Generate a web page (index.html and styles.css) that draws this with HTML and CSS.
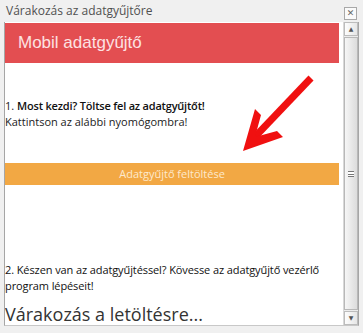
FILE: index.html
```html
<!DOCTYPE html>
<html lang="hu">
<head>
    <meta charset="UTF-8">
    <meta name="viewport" content="width=device-width, initial-scale=1.0">
    <title>Várakozás az adatgyűjtőre</title>
    <link rel="stylesheet" href="styles.css">
</head>
<body>
    <div class="window">
        <div class="titlebar">
            <span class="title">Várakozás az adatgyűjtőre</span>
            <span class="close">&#x2715;</span>
        </div>
        <div class="frame">
            <div class="page">
                <div class="header">Mobil adatgyűjtő</div>
                <p class="step first">1. <b>Most kezdi? Töltse fel az adatgyűjtőt!</b><br>Kattintson az alábbi nyomógombra!</p>
                <div class="upload">Adatgyűjtő feltöltése</div>
                <p class="step second">2. Készen van az adatgyűjtéssel? Kövesse az adatgyűjtő vezérlő program lépéseit!</p>
                <div class="waiting">Várakozás a letöltésre...</div>

                <!-- piros nyíl a gombra -->
                <svg class="arrow" width="80" height="84" viewBox="0 0 80 84">
                    <path d="M70 3 L10 66" stroke="#f01010" stroke-width="7" stroke-linecap="butt" fill="none"/>
                    <path d="M2 76 L14 34 L20 40 L14 62 L36 56 L42 62 Z" fill="#f01010"/>
                </svg>
            </div>
            <div class="scrollbar">
                <div class="sb-btn">&#9650;</div>
                <div class="sb-thumb"><span class="grip"></span></div>
                <div class="sb-btn">&#9660;</div>
            </div>
        </div>
    </div>
</body>
</html>
```

FILE: styles.css
```css
body {
    margin: 0;
    font-family: "Open Sans", sans-serif;
    background: #f0f0f0;
}

.window {
    width: 363px;
    height: 333px;
    overflow: hidden;
    background: #f0f0f0;
}

.titlebar {
    height: 22px;
    display: flex;
    align-items: center;
    justify-content: space-between;
    padding: 0 6px 0 6px;
    box-sizing: border-box;
}

.title {
    font-size: 12px;
    color: #505050;
    margin-top: -1px;
}

.close {
    width: 11px;
    height: 11px;
    border: 1px solid #a8a8a8;
    background: #fafafa;
    font-family: "DejaVu Sans", sans-serif;
    font-size: 9px;
    line-height: 11px;
    text-align: center;
    color: #666;
    margin-top: 4px;
}

.frame {
    margin-left: 4px;
    width: 355px;
    height: 304px;
    border: 1px solid #a6a6a6;
    border-top: none;
    border-bottom-color: #c8c8c8;
    box-sizing: border-box;
    background: #fff;
    display: flex;
}

.page {
    position: relative;
    width: 336px;
    height: 303px;
    overflow: hidden;
    background: #fff;
}

.header {
    height: 40px;
    margin-top: 1px;
    background: #e34e51;
    color: #fde2e2;
    font-family: "Liberation Sans", Arial, sans-serif;
    font-size: 17px;
    line-height: 40px;
    padding-left: 13px;
}

.step {
    margin: 0;
    font-size: 11px;
    line-height: 16px;
    color: #222;
}

.step b {
    font-weight: 600;
    color: #111;
    letter-spacing: -0.2px;
}

.first {
    margin-top: 35px;
}

.upload {
    margin-top: 33px;
    height: 22px;
    background: #f2a844;
    color: #fde8cc;
    font-size: 11px;
    line-height: 22px;
    text-align: center;
}

.second {
    margin-top: 77px;
    color: #111;
    letter-spacing: -0.1px;
}

.waiting {
    margin-top: 13px;
    font-size: 18px;
    line-height: 14px;
    color: #333;
}

.arrow {
    position: absolute;
    left: 236px;
    top: 53px;
}

.scrollbar {
    width: 14px;
    margin-left: 4px;
    display: flex;
    flex-direction: column;
    background: #ececec;
    border-left: 1px solid #d8d8d8;
}

.sb-btn {
    height: 14px;
    border: 1px solid #bcbcbc;
    background: linear-gradient(to right, #fdfdfd, #e6e6e6);
    box-sizing: border-box;
    font-family: "DejaVu Sans", sans-serif;
    font-size: 6px;
    line-height: 12px;
    text-align: center;
    color: #555;
}

.sb-thumb {
    flex: 1;
    margin: 1px 0;
    border: 1px solid #b8b8b8;
    background: linear-gradient(to right, #f6f6f6, #dcdcdc);
    display: flex;
    align-items: center;
    justify-content: center;
}

.grip {
    width: 6px;
    height: 6px;
    border-top: 1px solid #777;
    border-bottom: 1px solid #777;
    box-sizing: border-box;
    background: linear-gradient(#fff 2px, #777 2px, #777 3px, #fff 3px);
}
```
